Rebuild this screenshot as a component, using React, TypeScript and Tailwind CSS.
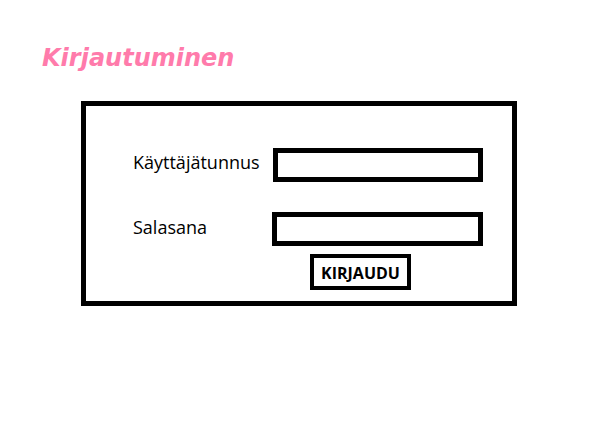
import React from 'react';

export default function App() {
  return (
    <div className="w-[612px] h-[440px] bg-white pt-[44px]" style={{ fontFamily: '"Open Sans", sans-serif' }}>
      <div
        className="pl-[42px] h-[29px] leading-[29px] text-[24px] font-bold italic text-[#ff7bab]"
        style={{ fontFamily: '"DejaVu Sans", sans-serif' }}
      >
        Kirjautuminen
      </div>

      <div className="ml-[81px] mt-[28px] w-[436px] h-[205px] border-[5px] border-black pt-[42px] pl-[47px]">
        <div className="flex items-center h-[34px]">
          <label className="w-[140px] text-[18px] text-black pb-[6px]">Käyttäjätunnus</label>
          <input type="text" className="w-[210px] h-[34px] border-[5px] border-black outline-none" />
        </div>
        <div className="flex items-center h-[34px] mt-[30px]">
          <label className="w-[139px] text-[18px] text-black pb-[4px]">Salasana</label>
          <input type="password" className="w-[211px] h-[34px] border-[5px] border-black outline-none" />
        </div>
        <button className="ml-[177px] mt-[8px] w-[101px] h-[36px] border-[4px] border-black flex items-center justify-center pt-[2px] text-[16px] font-bold text-black">
          KIRJAUDU
        </button>
      </div>
    </div>
  );
}
